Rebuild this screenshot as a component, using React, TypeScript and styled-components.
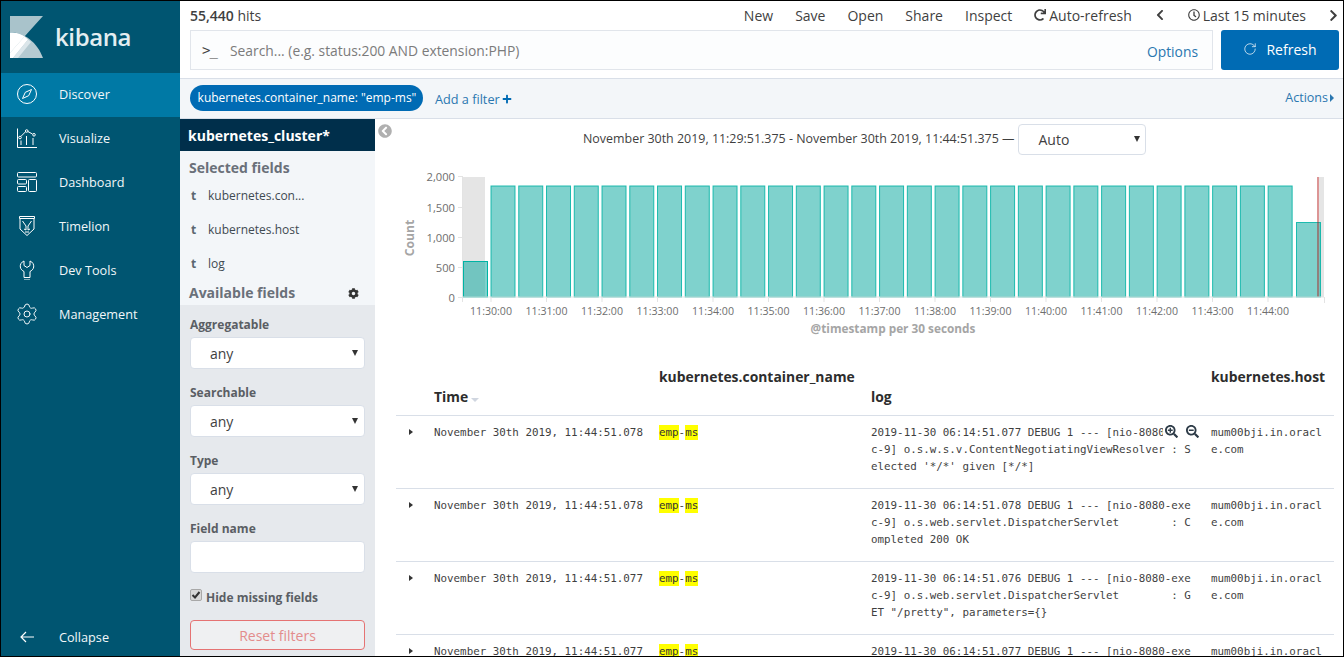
import React from "react";
import styled, { createGlobalStyle } from "styled-components";
import { FaChevronLeft, FaChevronRight, FaRegClock, FaRedo, FaSearchPlus, FaSearchMinus, FaCog, FaPlus, FaChevronCircleLeft } from "react-icons/fa";
import { RotateCw, Settings } from "lucide-react";

const Global = createGlobalStyle`
  html, body { margin: 0; padding: 0; background: #fff; }
  * { box-sizing: border-box; }
  body { font-family: "Open Sans", "Liberation Sans", sans-serif; overflow: hidden; }
`;

const Frame = styled.div`
  width: 1344px; height: 657px; overflow: hidden; display: flex;
  border: 1px solid #000;
  background: #fff;
`;
const Side = styled.nav`
  width: 179px; flex: none; background: #005571; display: flex; flex-direction: column; color: #fff;
`;
const LogoRow = styled.div`
  height: 72px; display: flex; align-items: center; padding-left: 9px; gap: 11px; flex: none;
`;
const LogoText = styled.span`
  font-size: 24px; font-weight: 600; letter-spacing: -0.4px; color: #e4eef1; line-height: 1; padding-bottom: 1px;
`;
const NavItem = styled.div<{ $active?: boolean }>`
  height: 44px; display: flex; align-items: center; padding: 0 0 2px 16px; gap: 22px; flex: none;
  font-size: 12.7px; font-weight: 400; color: #f2f7f9;
  background: ${(p) => (p.$active ? "#0079a5" : "transparent")};
  svg { width: 20px; height: 20px; flex: none; }
`;
const CollapseItem = styled(NavItem)`padding-top: 6px; padding-bottom: 0;`;
const GearSlot = styled.span`
  width: 20px; height: 20px; flex: none; display: flex; align-items: center; justify-content: center;
  svg { width: 24px; height: 24px; flex: none; }
`;
const SideSpacer = styled.div`flex: 1;`;
const Main = styled.div`flex: 1; min-width: 0; display: flex; flex-direction: column;`;
const TopNav = styled.div`
  height: 29px; flex: none; display: flex; align-items: center; padding: 0 3px 1px 10px; font-size: 14px; color: #3f3f3f;
`;
const Hits = styled.div`flex: 1; b { font-weight: 600; }`;
const NavLink = styled.span<{ $gap?: number }>`
  margin-left: ${(p) => p.$gap ?? 22}px; display: inline-flex; align-items: center; gap: 3px; white-space: nowrap;
  svg { flex: none; }
`;
const SearchRow = styled.div`
  display: flex; height: 49px; flex: none; padding: 0 4px 0 10px; gap: 8px; border-bottom: 1px solid #d9dfe8;
`;
const SearchBox = styled.div`
  flex: 1; height: 40px; background: #fcfdfe; border: 1px solid #e1e5eb; display: flex; align-items: center;
  padding: 0 14px 0 11px; font-size: 13.85px; color: #7b7b7b;
`;
const Prompt = styled.span`font-family: "DejaVu Sans Mono", monospace; font-size: 14px; color: #444; width: 28px; flex: none; letter-spacing: -1px;`;
const Placeholder = styled.span`flex: 1;`;
const Options = styled.span`color: #2a77b0; padding-top: 3px;`;
const RefreshBtn = styled.div`
  width: 118px; height: 40px; background: #006bb4; color: #fff; border-radius: 3px; display: flex; align-items: center;
  justify-content: center; gap: 9px; font-size: 14px; padding-bottom: 2px;
`;
const FilterBar = styled.div`
  height: 40px; flex: none; background: #f3f6f9; border-bottom: 1px solid #d9dfe8; display: flex; align-items: center;
  padding: 0 9px 2px 10px; font-size: 13px; color: #2a77b0;
`;
const Chip = styled.span`
  height: 26px; width: 233px; flex: none; border-radius: 13px; background: #006bb4; color: #fff; font-size: 12px; display: flex; align-items: center;
  justify-content: center; white-space: nowrap; margin-right: 12px; padding-left: 1px;
`;
const AddFilter = styled.span`display: inline-flex; align-items: center; gap: 2px; flex: 1; padding-top: 2px; font-size: 12.7px;`;
const Actions = styled.span`display: inline-flex; align-items: center; font-size: 12.5px; margin-top: 0;`;
const Tri = styled.i`
  display: inline-block; width: 0; height: 0; border-left: 4px solid #2a77b0; border-top: 4px solid transparent; border-bottom: 4px solid transparent; margin-left: 2px;
`;
const Body = styled.div`flex: 1; min-height: 0; display: flex;`;
const Left = styled.aside`width: 195px; flex: none; display: flex; flex-direction: column; background: #e6e9ed;`;
const IndexTitle = styled.div`
  height: 32px; flex: none; background: #002f4b; color: #fff; font-size: 14px; font-weight: 700; padding: 0 8px; display: flex; align-items: center;
`;
const Selected = styled.div`background: #f3f6f9; height: 154px; flex: none; padding: 7px 9px 0;`;
const SecTitle = styled.div<{ $push?: number }>`
  font-size: 14px; font-weight: 700; color: #6a7079; line-height: 20px; display: flex; justify-content: space-between; align-items: center; padding-right: 7px;
  margin-top: ${(p) => p.$push ?? 0}px;
`;
const Field = styled.div`
  height: 34px; display: flex; align-items: center; font-size: 12px; color: #3f4a52;
  b { width: 19px; font-weight: 700; color: #5b6770; padding-left: 2px; font-size: 12px; flex: none; }
`;
const Filters = styled.div`flex: 1; padding: 12px 10px 0; display: flex; flex-direction: column;`;
const FLabel = styled.div`font-size: 12px; font-weight: 700; color: #5a5e64; line-height: 16px; margin-bottom: 4px;`;
const Sel = styled.div<{ $w?: number }>`
  height: 32px; width: ${(p) => p.$w ?? 175}px; flex: none; background: #fff; border: 1px solid #d9dfe8; border-radius: 4px; display: flex; align-items: center; justify-content: space-between;
  padding: 0 6px 0 19px; font-size: 14px; color: #3f3f3f; margin-bottom: 16px;
`;
const Caret = styled.i`
  width: 0; height: 0; border-left: 3.5px solid transparent; border-right: 3.5px solid transparent; border-top: 6px solid #333; flex: none;
`;
const CheckRow = styled.div`display: flex; align-items: center; gap: 4px; font-size: 12px; font-weight: 700; color: #5a5e64; margin: -1px 0 14px; height: 18px;`;
const Check = styled.span`
  width: 12px; height: 12px; border-radius: 2px; background: #d8d8d8; border: 1px solid #a8a8a8; display: inline-flex; align-items: center; justify-content: center; flex: none; margin-top: -5px;
  svg { display: block; }
`;
const ResetBtn = styled.div`
  height: 30px; width: 175px; flex: none; border: 1px solid #e57373; border-radius: 4px; background: #eff0f2; color: #e38c8c; font-size: 14px; display: flex; align-items: center; justify-content: center;
`;
const Content = styled.main`flex: 1; min-width: 0; display: flex; flex-direction: column; position: relative;`;
const CollapseDot = styled.span`
  position: absolute; left: 3px; top: 5px; width: 14px; height: 14px; color: #b0b0b0; display: flex;
`;
const RangeRow = styled.div`
  height: 41px; flex: none; display: flex; align-items: center; padding: 0 0 3px 208px; font-size: 12.44px; color: #3f3f3f; gap: 6px; white-space: nowrap;
`;
const RangeSel = styled(Sel)`height: 31px; margin: 2px 0 0 -3px; padding: 0 5px 0 20px;`;
const ChartSvg = styled.svg`display: block; width: 969px; height: 185px; flex: none;`;
const Table = styled.div`margin: 16px 10px 0 21px; width: 938px; font-size: 14px;`;
const HeadRow = styled.div`
  display: grid; grid-template-columns: 38px 225px 212px 340px 1fr; height: 55px; border-bottom: 1px solid #d9dfe8; font-weight: 700; color: #2d2d2d; font-size: 13.9px;
`;
const Th = styled.div<{ $low?: boolean }>`
  line-height: 20px; padding-top: ${(p) => (p.$low ? 26 : 6)}px; white-space: nowrap; display: flex; align-items: flex-start; gap: 3px;
`;
const SortMark = styled.i`
  width: 0; height: 0; border-left: 4.5px solid transparent; border-right: 4.5px solid transparent; border-top: 4px solid #d0d6e0; margin-top: 11px;
`;
const Row = styled.div`
  display: grid; grid-template-columns: 38px 225px 212px 340px 1fr; height: 73px; border-bottom: 1px solid #d9dfe8;
  font-family: "DejaVu Sans Mono", monospace; font-size: 10.85px; line-height: 17px; color: #3f3f3f; padding-top: 8px;
`;
const Cell = styled.div`min-width: 0; position: relative;`;
const Wrapped = styled(Cell)`white-space: pre; overflow: hidden;`;
const Toggle = styled.span`
  display: block; width: 0; height: 0; margin: 5px 0 0 13px; border-left: 4px solid #333; border-top: 3.5px solid transparent; border-bottom: 3.5px solid transparent;
`;
const Mark = styled.mark`background: #ffff00; color: #333; padding: 1px 0;`;
const FilterIcons = styled.span`
  position: absolute; right: 12px; top: 1px; display: flex; gap: 8px; background: #fff; padding-left: 2px; color: #2d3b47;
`;

const Logo = () => (
  <svg width="34" height="43" viewBox="0 0 34 43" style={{ flex: "none" }}>
    <path d="M0 0H33L14.5 20.5C10 17.5 5 16 0 16Z" fill="#a9c3cb" />
    <path d="M0 16.5C14 16 27 26 33 42H0Z" fill="#b5cad1" />
    <path d="M0 16.5C5 16 10 17.5 14.5 20.5L0 37Z" fill="#fff" />
    <path d="M0 37L14.5 20.5L18 23.5L3 42H0Z" fill="#fff" />
    <path d="M3 42L18 23.5L21 26L8 42Z" fill="#dbe6ea" />
  </svg>
);

const s = { fill: "none", stroke: "#fff", strokeWidth: 1 } as const;
const CompassIcon = () => (
  <svg viewBox="0 0 20 20" {...s}>
    <circle cx="10" cy="10" r="9.5" />
    <path d="M14.5 5.5L11.7 11.7L5.5 14.5L8.3 8.3Z" />
  </svg>
);
const VizIcon = () => (
  <svg viewBox="0 0 20 20" {...s}>
    <path d="M0.5 0.5V19.5H20" />
    <path d="M3.8 8.5L8.5 3.8M11 3.6L15.5 6" />
    <circle cx="3" cy="9.5" r="1.3" /><circle cx="9.7" cy="3" r="1.3" /><circle cx="17" cy="6.8" r="1.3" />
    <path d="M4 17V12.5M9.5 17V8M16 17V10" />
  </svg>
);
const DashIcon = () => (
  <svg viewBox="0 0 20 20" {...s}>
    <rect x="0.5" y="0.5" width="19" height="4.5" rx="1" />
    <rect x="0.5" y="7.5" width="9" height="4.5" rx="1" />
    <rect x="0.5" y="14.5" width="9" height="5" rx="1" />
    <rect x="11.5" y="7.5" width="8" height="12" rx="1" />
  </svg>
);
const TimelionIcon = () => (
  <svg viewBox="0 0 20 20" {...s}>
    <path d="M2.5 0.5H17.5V2.5H2.5Z" />
    <path d="M3 2.5V13L10 19.5L17 13V2.5" />
    <path d="M5.5 5L9 10V14L7 13M14.5 5L11 10V14L13 13M8 16H12" />
  </svg>
);
const WrenchIcon = () => (
  <svg viewBox="0 0 20 20" {...s}>
    <path d="M7 1C4.2 2.2 3 4.5 3.3 7C3.6 9.3 5.5 10.8 7 11.5V17.5H13V11.5C14.5 10.8 16.4 9.3 16.7 7C17 4.5 15.8 2.2 13 1V5.5L10 7.5L7 5.5Z" />
    <path d="M7 20H13" />
  </svg>
);

const times = ["11:30:00","11:31:00","11:32:00","11:33:00","11:34:00","11:35:00","11:36:00","11:37:00","11:38:00","11:39:00","11:40:00","11:41:00","11:42:00","11:43:00","11:44:00"];
const yTicks: [string, number][] = [["2,000",176],["1,500",207],["1,000",237],["500",267],["0",297]];

const Chart = () => (
  <ChartSvg viewBox="375 160 969 185" fontFamily="'Open Sans', sans-serif">
    <rect x="463" y="177" width="22" height="120" fill="#e5e5e5" />
    <rect x="1317" y="177" width="7" height="120" fill="#e5e5e5" />
    <rect x="463.5" y="261.5" width="24" height="35.5" fill="#00a69b" fillOpacity="0.5" stroke="#00b3a4" />
    {Array.from({ length: 29 }, (_, i) => {
      const x = 491 + i * 27.755;
      return <rect key={i} x={x} y="186" width="24" height="111" fill="#00a69b" fillOpacity="0.5" stroke="#00b3a4" strokeOpacity="0.85" />;
    })}
    <rect x="1296.5" y="222.5" width="24" height="74.5" fill="#00a69b" fillOpacity="0.5" stroke="#00b3a4" strokeOpacity="0.85" />
    <rect x="1317" y="177" width="2" height="120" fill="#c00" fillOpacity="0.35" />
    <path d="M462.5 177V302M462.5 297H1324M1324.5 297V303" stroke="#e3e3e3" fill="none" />
    {yTicks.map(([l, y]) => (
      <g key={l}>
        <line x1="458" x2="463" y1={y + 0.5} y2={y + 0.5} stroke="#e3e3e3" />
        <text x="455" y={y + 4.5} textAnchor="end" fontSize="11.2" fill="#6e6e6e">{l}</text>
      </g>
    ))}
    {times.map((t, i) => {
      const x = 491 + i * 55.5;
      return (
        <g key={t}>
          <line x1={x} x2={x} y1="297" y2="302" stroke="#e3e3e3" />
          <text x={x} y="315" textAnchor="middle" fontSize="10.6" fill="#6e6e6e">{t}</text>
        </g>
      );
    })}
    <text transform="translate(414 238) rotate(-90)" textAnchor="middle" fontSize="12.2" fontWeight="700" fill="#a5a5a5">Count</text>
    <text x="893" y="333" textAnchor="middle" fontSize="11.8" fontWeight="700" fill="#a5a5a5">@timestamp per 30 seconds</text>
  </ChartSvg>
);

const rows = [
  { t: "November 30th 2019, 11:44:51.078", log: "2019-11-30 06:14:51.077 DEBUG 1 --- [nio-8080-exe\nc-9] o.s.w.s.v.ContentNegotiatingViewResolver : S\nelected '*/*' given [*/*]", icons: true },
  { t: "November 30th 2019, 11:44:51.078", log: "2019-11-30 06:14:51.078 DEBUG 1 --- [nio-8080-exe\nc-9] o.s.web.servlet.DispatcherServlet        : C\nompleted 200 OK" },
  { t: "November 30th 2019, 11:44:51.077", log: "2019-11-30 06:14:51.076 DEBUG 1 --- [nio-8080-exe\nc-9] o.s.web.servlet.DispatcherServlet        : G\nET \"/pretty\", parameters={}" },
  { t: "November 30th 2019, 11:44:51.077", log: "2019-11-30 06:14:51.077 DEBUG 1 --- [nio-8080-exe\nc-9] o.s.w.s.v.ContentNegotiatingViewResolver : S\nelected '*/*' given [*/*]" },
];

export default function App() {
  return (
    <Frame>
      <Global />
      <Side>
        <LogoRow><Logo /><LogoText>kibana</LogoText></LogoRow>
        <NavItem $active><CompassIcon />Discover</NavItem>
        <NavItem><VizIcon />Visualize</NavItem>
        <NavItem><DashIcon />Dashboard</NavItem>
        <NavItem><TimelionIcon />Timelion</NavItem>
        <NavItem><WrenchIcon />Dev Tools</NavItem>
        <NavItem><GearSlot><Settings strokeWidth={1} /></GearSlot>Management</NavItem>
        <SideSpacer />
        <CollapseItem>
          <svg viewBox="0 0 20 20" {...s} strokeWidth={1.2}><path d="M17 10H4M9 5L4 10L9 15" /></svg>
          Collapse
        </CollapseItem>
      </Side>
      <Main>
        <TopNav>
          <Hits><b>55,440</b> hits</Hits>
          <NavLink>New</NavLink>
          <NavLink>Save</NavLink>
          <NavLink>Open</NavLink>
          <NavLink>Share</NavLink>
          <NavLink>Inspect</NavLink>
          <NavLink><FaRedo size={12} />Auto-refresh</NavLink>
          <NavLink $gap={22}><FaChevronLeft size={12} /></NavLink>
          <NavLink $gap={22}><FaRegClock size={12} />Last 15 minutes</NavLink>
          <NavLink $gap={21}><FaChevronRight size={13} /></NavLink>
        </TopNav>
        <SearchRow>
          <SearchBox>
            <Prompt>&gt;_</Prompt>
            <Placeholder>Search... (e.g. status:200 AND extension:PHP)</Placeholder>
            <Options>Options</Options>
          </SearchBox>
          <RefreshBtn><RotateCw size={14} strokeWidth={1.2} />Refresh</RefreshBtn>
        </SearchRow>
        <FilterBar>
          <Chip>kubernetes.container_name: "emp-ms"</Chip>
          <AddFilter>Add a filter <FaPlus size={10} color="#006bb4" /></AddFilter>
          <Actions>Actions<Tri /></Actions>
        </FilterBar>
        <Body>
          <Left>
            <IndexTitle>kubernetes_cluster*</IndexTitle>
            <Selected>
              <SecTitle>Selected fields</SecTitle>
              <Field><b>t</b>kubernetes.con...</Field>
              <Field><b>t</b>kubernetes.host</Field>
              <Field><b>t</b>log</Field>
              <SecTitle $push={3}>Available fields <FaCog size={11} color="#333" /></SecTitle>
            </Selected>
            <Filters>
              <FLabel>Aggregatable</FLabel>
              <Sel>any<Caret /></Sel>
              <FLabel>Searchable</FLabel>
              <Sel>any<Caret /></Sel>
              <FLabel>Type</FLabel>
              <Sel>any<Caret /></Sel>
              <FLabel>Field name</FLabel>
              <Sel />
              <CheckRow>
                <Check><svg width="10" height="10" viewBox="0 0 10 10"><path d="M1.5 5L4 7.5L8.5 2" fill="none" stroke="#333" strokeWidth="2" /></svg></Check>
                Hide missing fields
              </CheckRow>
              <ResetBtn>Reset filters</ResetBtn>
            </Filters>
          </Left>
          <Content>
            <CollapseDot><FaChevronCircleLeft size={14} /></CollapseDot>
            <RangeRow>
              November 30th 2019, 11:29:51.375 - November 30th 2019, 11:44:51.375 —
              <RangeSel $w={128}>Auto<Caret /></RangeSel>
            </RangeRow>
            <Chart />
            <Table>
              <HeadRow>
                <Th />
                <Th $low>Time<SortMark /></Th>
                <Th>kubernetes.container_name</Th>
                <Th $low>log</Th>
                <Th>kubernetes.host</Th>
              </HeadRow>
              {rows.map((r, i) => (
                <Row key={i}>
                  <Cell><Toggle /></Cell>
                  <Cell>{r.t}</Cell>
                  <Cell><Mark>emp</Mark>-<Mark>ms</Mark></Cell>
                  <Wrapped>
                    {r.log}
                    {r.icons && (
                      <FilterIcons>
                        <FaSearchPlus size={13} />
                        <FaSearchMinus size={13} />
                      </FilterIcons>
                    )}
                  </Wrapped>
                  <Wrapped>{"mum00bji.in.oracl\ne.com"}</Wrapped>
                </Row>
              ))}
            </Table>
          </Content>
        </Body>
      </Main>
    </Frame>
  );
}
